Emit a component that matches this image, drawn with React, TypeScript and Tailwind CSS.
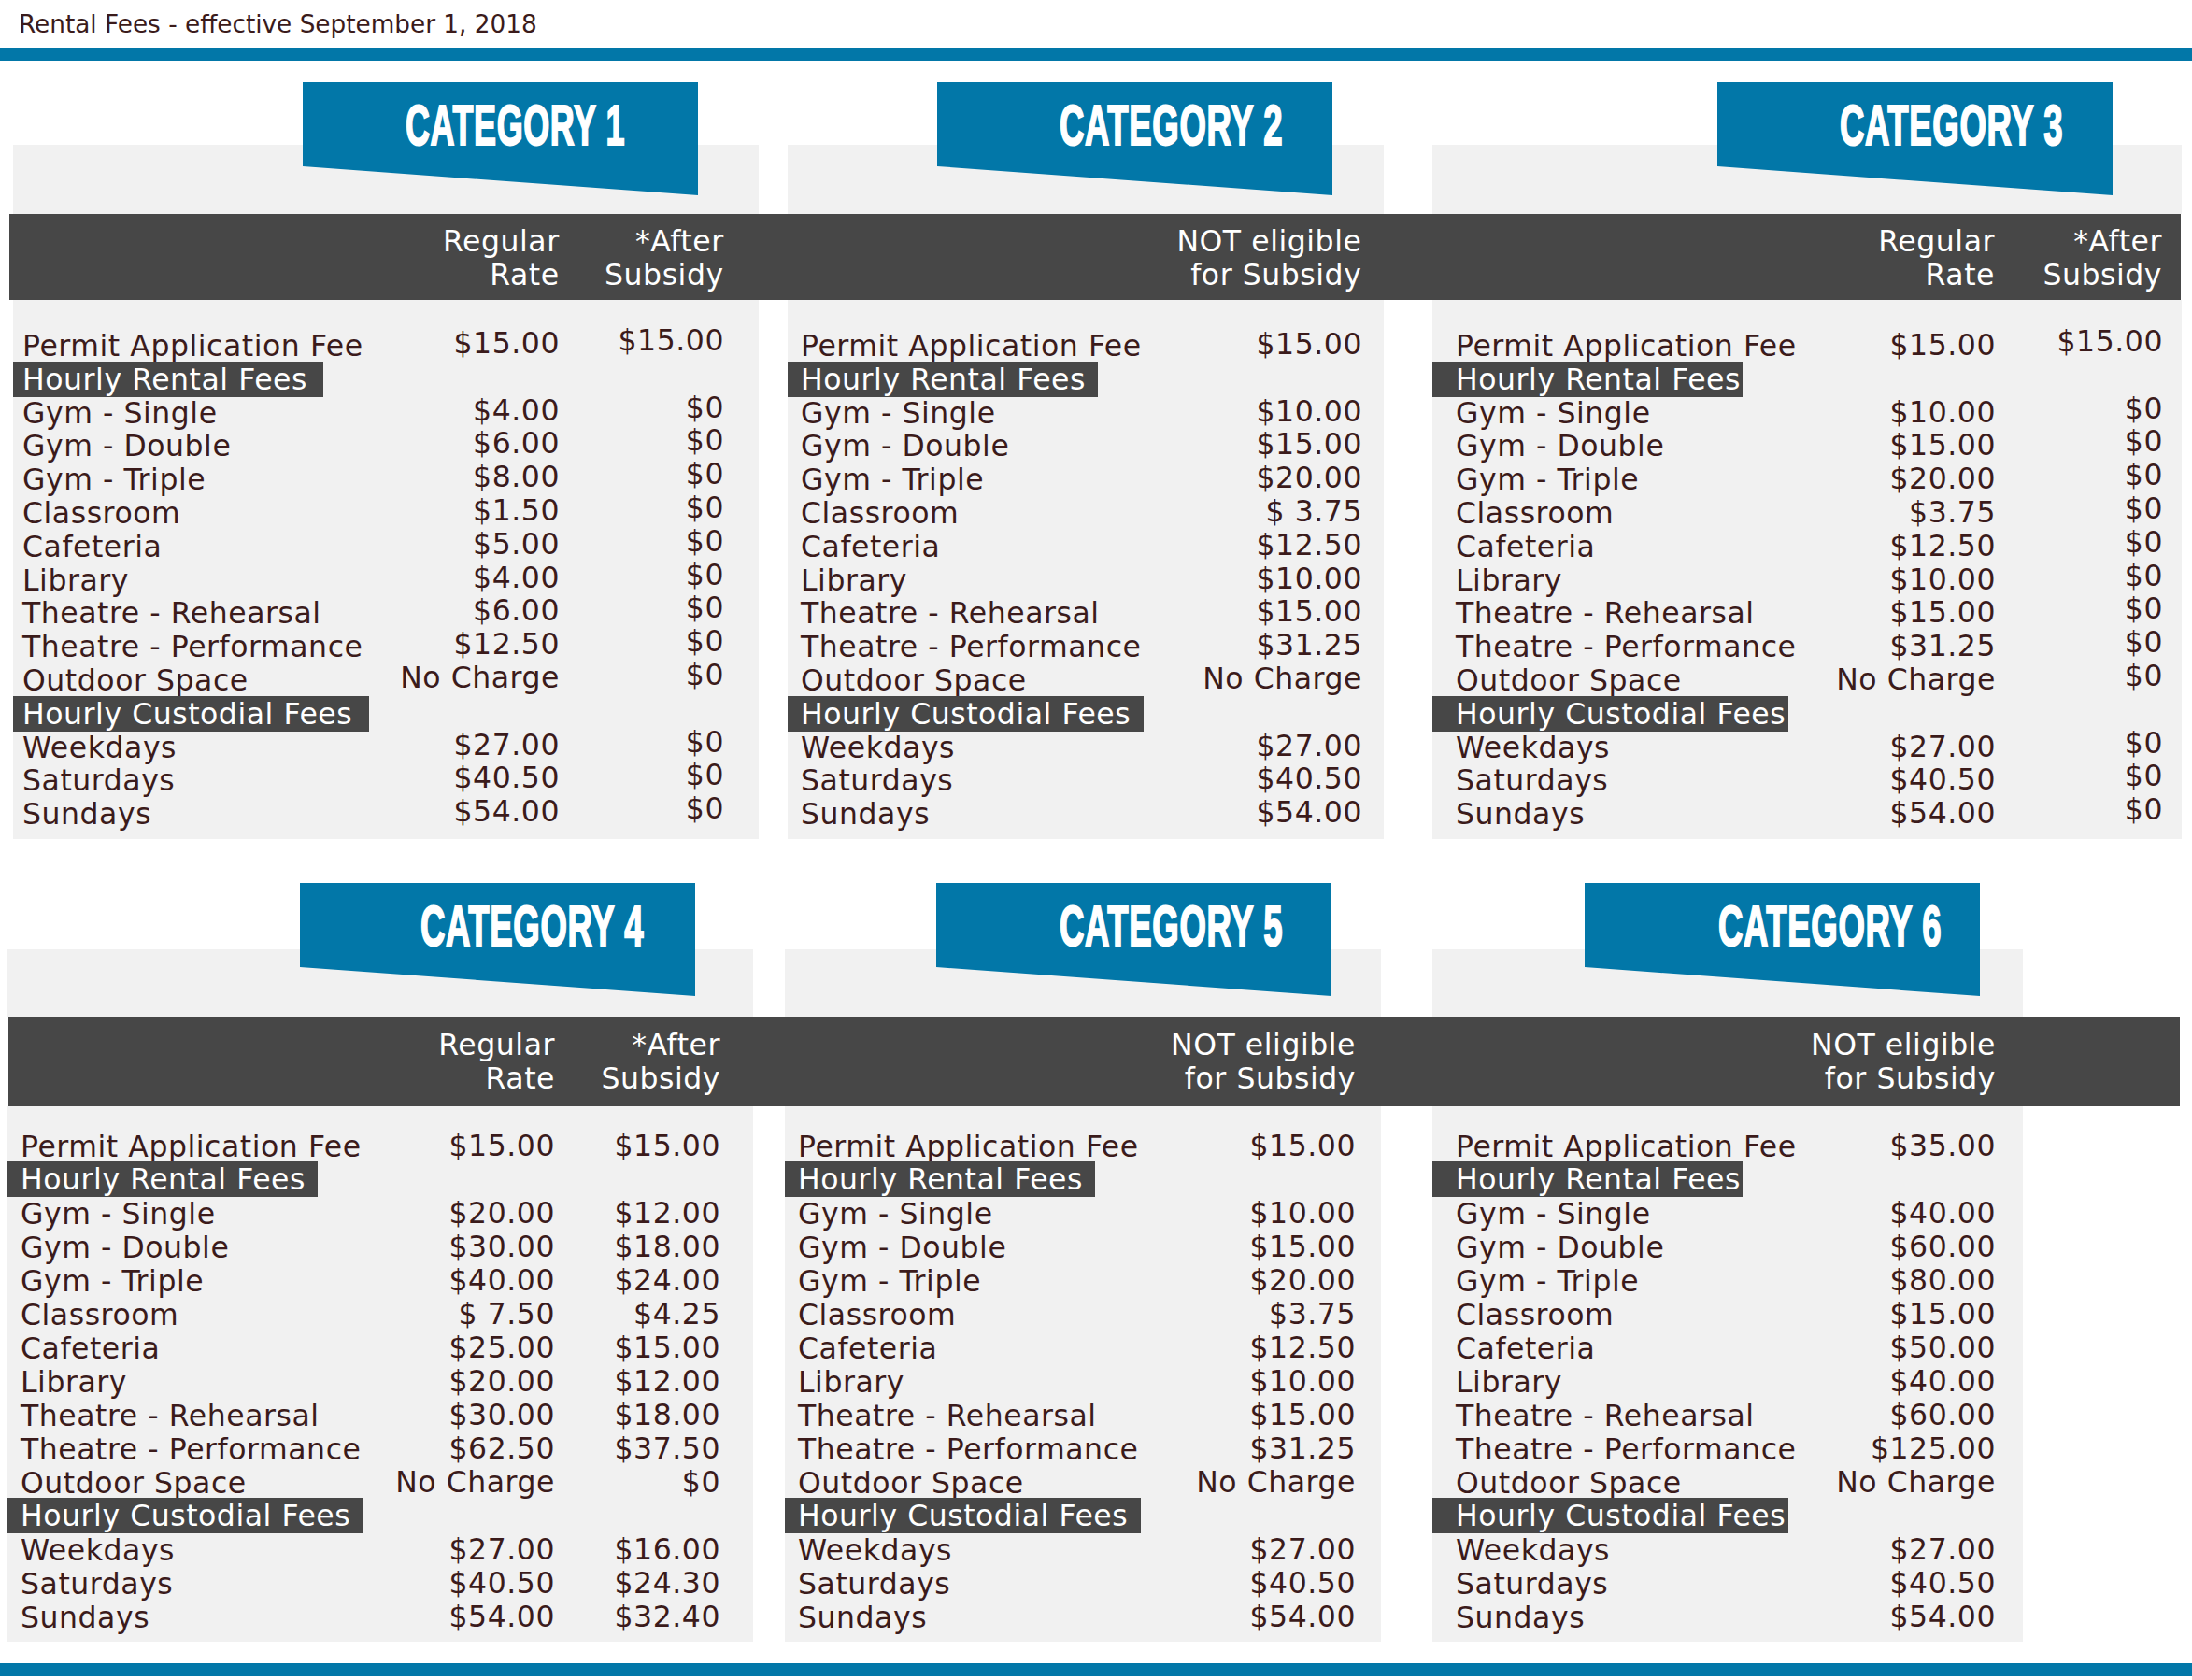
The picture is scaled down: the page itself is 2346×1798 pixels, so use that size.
import React from "react";

type Col = { w: string; shift: string; head: [string, string]; vals: string[] };
type Cat = {
  col: string;
  bannerMl: string;
  textMl: string;
  scale: string;
  title: string;
  pl: string;
  pr: string;
  cols: Col[];
};

const LABELS = [
  "Permit Application Fee",
  "Hourly Rental Fees",
  "Gym - Single",
  "Gym - Double",
  "Gym - Triple",
  "Classroom",
  "Cafeteria",
  "Library",
  "Theatre - Rehearsal",
  "Theatre - Performance",
  "Outdoor Space",
  "Hourly Custodial Fees",
  "Weekdays",
  "Saturdays",
  "Sundays",
];

const expand = (v: string[]) => [v[0], "", ...v.slice(1, 10), "", ...v.slice(10)];

const ZERO = (first: string) => [first, "$0", "$0", "$0", "$0", "$0", "$0", "$0", "$0", "$0", "$0", "$0", "$0"];

const HEAD_REG: [string, string] = ["Regular", "Rate"];
const HEAD_AFTER: [string, string] = ["*After", "Subsidy"];
const HEAD_NOT: [string, string] = ["NOT eligible", "for Subsidy"];

const row1: Cat[] = [
  {
    col: "ml-[14px] w-[798px]",
    bannerMl: "ml-[310px]",
    textMl: "ml-[110px]",
    scale: "scale-x-[0.59]",
    title: "CATEGORY 1",
    pl: "pl-[10px]",
    pr: "pr-[37px]",
    cols: [
      {
        w: "w-[200px]",
        shift: "-mt-[3px]",
        head: HEAD_REG,
        vals: ["$15.00", "$4.00", "$6.00", "$8.00", "$1.50", "$5.00", "$4.00", "$6.00", "$12.50", "No Charge", "$27.00", "$40.50", "$54.00"],
      },
      { w: "w-[176px]", shift: "-mt-[6px]", head: HEAD_AFTER, vals: ZERO("$15.00") },
    ],
  },
  {
    col: "ml-[31px] w-[638px]",
    bannerMl: "ml-[160px]",
    textMl: "ml-[131px]",
    scale: "scale-x-[0.6]",
    title: "CATEGORY 2",
    pl: "pl-[14px]",
    pr: "pr-[23px]",
    cols: [
      {
        w: "w-[220px]",
        shift: "-mt-[2px]",
        head: HEAD_NOT,
        vals: ["$15.00", "$10.00", "$15.00", "$20.00", "$ 3.75", "$12.50", "$10.00", "$15.00", "$31.25", "No Charge", "$27.00", "$40.50", "$54.00"],
      },
    ],
  },
  {
    col: "ml-[52px] w-[802px]",
    bannerMl: "ml-[305px]",
    textMl: "ml-[131px]",
    scale: "scale-x-[0.6]",
    title: "CATEGORY 3",
    pl: "pl-[25px]",
    pr: "pr-[20px]",
    cols: [
      {
        w: "w-[200px]",
        shift: "-mt-[1px]",
        head: HEAD_REG,
        vals: ["$15.00", "$10.00", "$15.00", "$20.00", "$3.75", "$12.50", "$10.00", "$15.00", "$31.25", "No Charge", "$27.00", "$40.50", "$54.00"],
      },
      { w: "w-[179px]", shift: "-mt-[5px]", head: HEAD_AFTER, vals: ZERO("$15.00") },
    ],
  },
];

const row2: Cat[] = [
  {
    col: "ml-[8px] w-[798px]",
    bannerMl: "ml-[313px]",
    textMl: "ml-[129px]",
    scale: "scale-x-[0.6]",
    title: "CATEGORY 4",
    pl: "pl-[14px]",
    pr: "pr-[35px]",
    cols: [
      {
        w: "w-[200px]",
        shift: "-mt-[1px]",
        head: HEAD_REG,
        vals: ["$15.00", "$20.00", "$30.00", "$40.00", "$ 7.50", "$25.00", "$20.00", "$30.00", "$62.50", "No Charge", "$27.00", "$40.50", "$54.00"],
      },
      {
        w: "w-[177px]",
        shift: "-mt-[1px]",
        head: HEAD_AFTER,
        vals: ["$15.00", "$12.00", "$18.00", "$24.00", "$4.25", "$15.00", "$12.00", "$18.00", "$37.50", "$0", "$16.00", "$24.30", "$32.40"],
      },
    ],
  },
  {
    col: "ml-[34px] w-[638px]",
    bannerMl: "ml-[162px]",
    textMl: "ml-[132px]",
    scale: "scale-x-[0.6]",
    title: "CATEGORY 5",
    pl: "pl-[14px]",
    pr: "pr-[27px]",
    cols: [
      {
        w: "w-[220px]",
        shift: "-mt-[1px]",
        head: HEAD_NOT,
        vals: ["$15.00", "$10.00", "$15.00", "$20.00", "$3.75", "$12.50", "$10.00", "$15.00", "$31.25", "No Charge", "$27.00", "$40.50", "$54.00"],
      },
    ],
  },
  {
    col: "ml-[55px] w-[632px]",
    bannerMl: "ml-[163px]",
    textMl: "ml-[143px]",
    scale: "scale-x-[0.6]",
    title: "CATEGORY 6",
    pl: "pl-[25px]",
    pr: "pr-[29px]",
    cols: [
      {
        w: "w-[220px]",
        shift: "-mt-[1px]",
        head: HEAD_NOT,
        vals: ["$35.00", "$40.00", "$60.00", "$80.00", "$15.00", "$50.00", "$40.00", "$60.00", "$125.00", "No Charge", "$27.00", "$40.50", "$54.00"],
      },
    ],
  },
];

function Banner({ cat }: { cat: Cat }) {
  return (
    <div
      className={`relative z-10 h-[121px] w-[423px] bg-[#0277a8] ${cat.bannerMl} [clip-path:polygon(0_0,100%_0,100%_100%,0_74.4%)]`}
    >
      <div className={`pt-[16px] ${cat.textMl}`}>
        <span
          className={`inline-block origin-left ${cat.scale} whitespace-nowrap tracking-[1px] [font-family:'Liberation_Sans',Arial,sans-serif] font-bold text-[61px] leading-[60px] text-white [-webkit-text-stroke:2px_white]`}
        >
          {cat.title}
        </span>
      </div>
    </div>
  );
}

function BannerRow({ cats, overlap, grayH }: { cats: Cat[]; overlap: string; grayH: string }) {
  return (
    <div className="flex items-start">
      {cats.map((c) => (
        <div key={c.title} className={`${c.col} flex flex-col`}>
          <Banner cat={c} />
          <div className={`${overlap} ${grayH} bg-[#f1f1f1]`} />
        </div>
      ))}
    </div>
  );
}

function HeaderBand({ cats, bandCls, innerCls }: { cats: Cat[]; bandCls: string; innerCls: string }) {
  return (
    <div className={`${bandCls} bg-[#474747]`}>
      <div className={`flex ${innerCls}`}>
        {cats.map((c) => (
          <div key={c.title} className={`${c.col} flex items-start ${c.pr}`}>
            <div className="flex-1" />
            {c.cols.map((col, i) => (
              <div key={i} className={`${col.w} text-right text-white leading-[36px] whitespace-nowrap`}>
                <div>{col.head[0]}</div>
                <div>{col.head[1]}</div>
              </div>
            ))}
          </div>
        ))}
      </div>
    </div>
  );
}

function Body({ cats, panelCls, lineCls }: { cats: Cat[]; panelCls: string; lineCls: string }) {
  return (
    <div className="flex items-start">
      {cats.map((c) => (
        <div key={c.title} className={`${c.col} ${panelCls} bg-[#f1f1f1] flex items-start ${c.pr}`}>
          <div className="flex-1 flex flex-col">
            {LABELS.map((l, i) =>
              i === 1 || i === 11 ? (
                <div key={i} className={lineCls}>
                  <div
                    className={`${i === 1 ? "w-[332px]" : "w-[381px]"} ${c.pl} -mt-[2px] h-[38px] leading-[38px] bg-[#474747] text-white whitespace-nowrap`}
                  >
                    {l}
                  </div>
                </div>
              ) : (
                <div key={i} className={`${lineCls} ${c.pl} whitespace-nowrap`}>
                  {l}
                </div>
              )
            )}
          </div>
          {c.cols.map((col, ci) => (
            <div key={ci} className={`${col.w} ${col.shift} flex flex-col text-right`}>
              {expand(col.vals).map((v, i) => (
                <div key={i} className={`${lineCls} whitespace-nowrap`}>
                  {v}
                </div>
              ))}
            </div>
          ))}
        </div>
      ))}
    </div>
  );
}

export default function App() {
  return (
    <div className="w-[2346px] h-[1798px] overflow-hidden bg-white text-[#3b1b1b] [font-family:'DejaVu_Sans',sans-serif]">
      <div className="pl-[20px] pt-[11px] h-[41px] text-[26.3px] leading-[30px] whitespace-nowrap">
        Rental Fees - effective September 1, 2018
      </div>
      <div className="mt-[10px] h-[14px] bg-[#0277a8]" />

      <div className="text-[31.5px] tracking-[0.55px]">
        {/* Row 1 */}
        <div className="mt-[23px]">
          <BannerRow cats={row1} overlap="-mt-[54px]" grayH="h-[74px]" />
          <HeaderBand cats={row1} bandCls="ml-[10px] w-[2324px] h-[92px] pt-[11px]" innerCls="-ml-[10px]" />
          <Body cats={row1} panelCls="h-[577px] pt-[32px]" lineCls="h-[35.8px] leading-[35.8px]" />
        </div>

        {/* Row 2 */}
        <div className="mt-[47px]">
          <BannerRow cats={row2} overlap="-mt-[50px]" grayH="h-[72px]" />
          <HeaderBand cats={row2} bandCls="ml-[9px] w-[2324px] h-[96px] pt-[12px]" innerCls="-ml-[9px]" />
          <Body cats={row2} panelCls="h-[573px] pt-[25px]" lineCls="h-[36px] leading-[36px]" />
        </div>
      </div>

      <div className="mt-[23px] h-[14px] bg-[#0277a8]" />
    </div>
  );
}
